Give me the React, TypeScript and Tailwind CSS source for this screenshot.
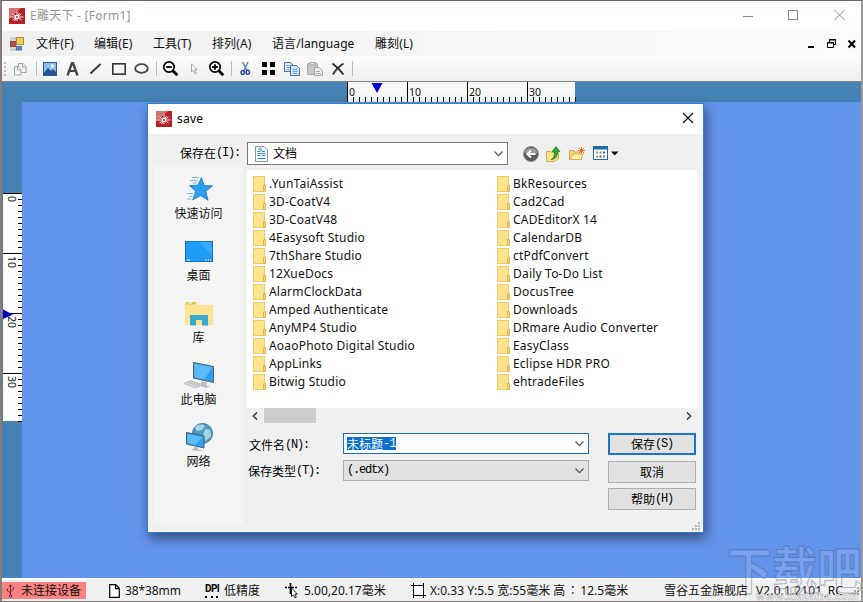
import type { ReactNode } from "react";
import clsx from "clsx";

const menus = [
  { label: "文件(F)", width: "w-[58px]" },
  { label: "编辑(E)", width: "w-[59px]" },
  { label: "工具(T)", width: "w-[59px]" },
  { label: "排列(A)", width: "w-[60px]" },
  { label: "语言/language", width: "w-[103px]" },
  { label: "雕刻(L)", width: "w-[50px]" },
];

const leftFiles = [
  ".YunTaiAssist",
  "3D-CoatV4",
  "3D-CoatV48",
  "4Easysoft Studio",
  "7thShare Studio",
  "12XueDocs",
  "AlarmClockData",
  "Amped Authenticate",
  "AnyMP4 Studio",
  "AoaoPhoto Digital Studio",
  "AppLinks",
  "Bitwig Studio",
];

const rightFiles = [
  "BkResources",
  "Cad2Cad",
  "CADEditorX 14",
  "CalendarDB",
  "ctPdfConvert",
  "Daily To-Do List",
  "DocusTree",
  "Downloads",
  "DRmare Audio Converter",
  "EasyClass",
  "Eclipse HDR PRO",
  "ehtradeFiles",
];

const ticks = Array.from({ length: 39 }, (_, i) => i);

function AppLogo() {
  return (
    <svg width="16" height="16" viewBox="0 0 16 16">
      <rect width="16" height="16" fill="#b81f24" />
      <path d="M0 0h12L0 11z" fill="#d4736f" />
      <path
        d="M8 3.500v9.500M1.500 9h13M3.500 6l9 6M12.500 6l-9 6M5.500 13l5-8"
        stroke="#fff"
        strokeWidth=".9"
      />
      <circle cx="8" cy="9" r="2.300" fill="#fff" />
      <circle cx="8" cy="9" r=".9" fill="#b81f24" />
    </svg>
  );
}

function FormIcon() {
  return (
    <svg width="15" height="14" viewBox="0 0 15 14">
      <rect x="1" y="1" width="5" height="12" fill="#dedede" stroke="#b9b9b9" />
      <rect x=".5" y="4.500" width="5" height="5" fill="#c8453b" stroke="#8d4a48" />
      <rect x="6.500" y=".5" width="7" height="7" fill="#f6cf55" stroke="#a88a3c" />
      <rect x="6.500" y="9.500" width="5" height="3.500" fill="#4f86d8" stroke="#5273a8" />
    </svg>
  );
}

function MagnifierIcon({ plus }: { plus?: boolean }) {
  return (
    <svg width="17" height="17" viewBox="0 0 17 17" fill="none" stroke="#000">
      <circle cx="7" cy="7" r="5.200" strokeWidth="1.700" />
      <path d="M10.800 10.800l4.500 4.500" strokeWidth="2.800" />
      <path d={plus ? "M4.200 7h5.600M7 4.200v5.600" : "M4.200 7h5.600"} strokeWidth="1.800" />
    </svg>
  );
}

function CopyIcon({ gray }: { gray?: boolean }) {
  if (gray) {
    return (
      <svg width="14" height="14" viewBox="0 0 14 14" fill="#f3f3f3" stroke="#a3a3a3">
        <path d="M5.500 1.500h4.500l3 3v6H5.500z" />
        <path d="M9.500 1.500v3.500h3.500" />
        <path d="M1.500 4.500h3.500l3 3v5.500h-6.500z" />
        <path d="M4.500 4.500V8H8" />
      </svg>
    );
  }
  return (
    <svg width="16" height="14" viewBox="0 0 16 14" fill="#dce9fa" stroke="#3f6fb5">
      <path d="M.5.500h6l3 3v6h-9z" />
      <path d="M2.500 3.500h3M2.500 5.500h5M2.500 7.500h4" stroke="#7ba2d8" />
      <path d="M6.500 3.500h6l3 3v7h-9z" />
      <path d="M8.500 7.500h5M8.500 9.500h5M8.500 11.500h5" stroke="#7ba2d8" />
    </svg>
  );
}

function Tool({ children }: { children: ReactNode }) {
  return (
    <button className="flex h-[25px] w-[23px] items-center justify-center">
      {children}
    </button>
  );
}

function ToolSeparator({ wide }: { wide?: boolean }) {
  return (
    <div className={clsx("flex justify-center", wide ? "w-[7px] pl-1" : "w-[6px]")}>
      <div className="h-[15px] w-px bg-[#bdbdbd]" />
    </div>
  );
}

function TitleBar() {
  return (
    <div className="flex h-[30px] shrink-0 items-center bg-white pl-[7px]">
      <AppLogo />
      <span className="ml-[5px] text-[12px] tracking-[0.25px] text-[#979797]">
        E雕天下 - [Form1]
      </span>
      <svg
        className="mr-[15px] ml-auto"
        width="103"
        height="12"
        viewBox="0 0 103 12"
        fill="none"
        stroke="#8a8a8a"
      >
        <path d="M0 6.500h10" />
        <rect x="45.500" y=".5" width="9" height="9" />
        <path d="M91.500 0l10 10M101.500 0l-10 10" />
      </svg>
    </div>
  );
}

function MenuBar() {
  return (
    <div className="flex h-[25px] shrink-0 items-center bg-linear-to-r from-[#f0f0f0] to-[#fbfbfb] pl-2">
      <FormIcon />
      <div className="ml-[11px] flex text-[12px] tracking-[0.1px] text-[#111]">
        {menus.map((menu) => (
          <button key={menu.label} className={clsx("text-left whitespace-nowrap", menu.width)}>
            {menu.label}
          </button>
        ))}
      </div>
      <svg
        className="mr-[5px] ml-auto"
        width="48"
        height="10"
        viewBox="0 0 48 10"
        fill="none"
        stroke="#000"
      >
        <path d="M0 8h6" strokeWidth="2" />
        <path d="M21.500 3V.500h6v5H26M21 1h7" />
        <path d="M19.500 3.500h6v5h-6zM19 4h7" />
        <path d="M40.500 1.500l6.500 7M47 1.500l-6.500 7" strokeWidth="2" />
      </svg>
    </div>
  );
}

function ToolBar() {
  return (
    <div className="flex h-[26px] shrink-0 items-center border-b border-[#7d8286] bg-linear-to-b from-[#fcfcfc] to-[#efefef] pl-px">
      <div className="flex w-[5px] flex-col gap-0.5 pl-px">
        {[0, 1, 2, 3].map((dot) => (
          <div key={dot} className="size-0.5 bg-[#bcbcbc]" />
        ))}
      </div>
      <Tool>
        <CopyIcon gray />
      </Tool>
      <ToolSeparator wide />
      <Tool>
        <svg width="14" height="14" viewBox="0 0 14 14">
          <rect x=".5" y=".5" width="13" height="13" fill="#8dbdee" stroke="#2d5c9e" />
          <path d="M1 11l4-5 3 3 2-2 3 3v3H1z" fill="#1f4f94" />
          <circle cx="9.500" cy="4" r="1.700" fill="#fff" />
        </svg>
      </Tool>
      <Tool>
        <svg width="13" height="14" viewBox="0 0 13 14" fill="none" stroke="#444">
          <path d="M1.500 13.500L6 1h1l4.500 12.500" strokeWidth="2.300" />
          <path d="M3.500 9h6" strokeWidth="2" />
        </svg>
      </Tool>
      <Tool>
        <svg width="13" height="13" viewBox="0 0 13 13">
          <path d="M1.500 11.500l10-9.500" stroke="#333" strokeWidth="1.800" />
        </svg>
      </Tool>
      <Tool>
        <svg width="14" height="12" viewBox="0 0 14 12">
          <rect x=".8" y=".8" width="12.400" height="10.400" fill="none" stroke="#333" strokeWidth="1.600" />
        </svg>
      </Tool>
      <Tool>
        <svg width="15" height="11" viewBox="0 0 15 11">
          <ellipse cx="7.500" cy="5.500" rx="6.300" ry="4.300" fill="none" stroke="#444" strokeWidth="1.800" />
        </svg>
      </Tool>
      <ToolSeparator />
      <Tool>
        <MagnifierIcon />
      </Tool>
      <Tool>
        <svg width="8" height="12" viewBox="0 0 8 12">
          <path d="M1.500.800v8l2-1.700 1.500 3.800 1.300-.6-1.600-3.600 2.500-.2z" fill="#fff" stroke="#8c98ab" strokeWidth=".8" />
        </svg>
      </Tool>
      <Tool>
        <MagnifierIcon plus />
      </Tool>
      <ToolSeparator />
      <Tool>
        <svg width="11" height="15" viewBox="0 0 11 15" fill="none">
          <path d="M2.500 1l4.500 8.500M8 1L4 9.500" stroke="#5d82b8" strokeWidth="1.500" />
          <ellipse cx="2.800" cy="11.500" rx="1.700" ry="2" stroke="#244f9c" strokeWidth="1.500" />
          <ellipse cx="7.800" cy="11.200" rx="1.700" ry="2" stroke="#244f9c" strokeWidth="1.500" />
        </svg>
      </Tool>
      <Tool>
        <div className="grid grid-cols-2 gap-[3px]">
          {[0, 1, 2, 3].map((cell) => (
            <div key={cell} className="size-[5px] bg-black" />
          ))}
        </div>
      </Tool>
      <Tool>
        <CopyIcon />
      </Tool>
      <Tool>
        <svg width="16" height="14" viewBox="0 0 16 14" stroke="#a5a5a5">
          <rect x=".5" y="1.500" width="10" height="11" rx="1" fill="#c6c6c6" />
          <rect x="3" y=".5" width="5" height="2.500" fill="#e3e3e3" />
          <path d="M7.500 5.500h5l3 3v5h-8z" fill="#eaeaea" />
          <path d="M9 9.500h4M9 11.500h5" />
        </svg>
      </Tool>
      <Tool>
        <svg width="14" height="14" viewBox="0 0 14 14" fill="none" stroke="#2d2d33">
          <path d="M1.500 1.500C5 4 9 8 12.500 12.500" strokeWidth="2" />
          <path d="M12.500 1.500C8.500 4 4.500 8 2 12.500" strokeWidth="1.700" />
        </svg>
      </Tool>
      <ToolSeparator />
    </div>
  );
}

function TopRuler() {
  return (
    <svg className="shrink-0" width="229" height="20" viewBox="0 0 229 20">
      <rect width="228" height="20" fill="#f8f8f8" />
      {ticks.map((i) => (
        <rect key={i} x={i * 6} y={i % 10 === 0 ? 0 : 15} width="1" height="20" fill="#000" />
      ))}
      {[0, 10, 20, 30].map((n) => (
        <text key={n} x={n * 6 + 2} y="14" fontSize="10.500" fill="#111">
          {n}
        </text>
      ))}
      <path d="M24.500 1h11L30 11z" fill="#0000d8" />
    </svg>
  );
}

function LeftRuler() {
  return (
    <svg className="shrink-0" width="20" height="229" viewBox="0 0 20 229">
      <rect x="1" width="19" height="228" fill="#fff" />
      {ticks.map((i) => (
        <rect key={i} x={i % 10 === 0 ? 1 : 16} y={i * 6} width="20" height="1" fill="#000" />
      ))}
      <path d="M1 116.500v9.500l10-4.500z" fill="#0000c0" />
      {[0, 10, 20, 30].map((n) => (
        <text
          key={n}
          transform={`translate(6 ${n * 6 + 3}) rotate(90)`}
          fontSize="10.500"
          fill="#111"
        >
          {n}
        </text>
      ))}
    </svg>
  );
}

/* Fixed-pitch label: full-width ideographs followed by half-width latin */
function DialogText({ cjk, latin }: { cjk?: string; latin?: string }) {
  return (
    <span className="inline-flex items-center text-[12px] leading-none whitespace-pre text-black">
      {cjk && <span className="font-['Noto_Sans_CJK_SC',sans-serif]">{cjk}</span>}
      {latin && (
        <span className="font-['Liberation_Mono',monospace] tracking-[-1.2px]">{latin}</span>
      )}
    </span>
  );
}

function Chevron() {
  return (
    <svg width="9" height="6" viewBox="0 0 9 6" fill="none" stroke="#555" strokeWidth="1.200">
      <path d="M.5.500l4 4.200 4-4.200" />
    </svg>
  );
}

function FolderIcon() {
  return (
    <svg width="13" height="16" viewBox="0 0 13 16">
      <rect x=".5" y=".5" width="11" height="15" fill="#ffe28c" stroke="#eccb6b" />
      <path d="M10.500 9.500h2v6h-2z" fill="#fbd568" stroke="#dfb850" />
    </svg>
  );
}

function FileColumn({ files }: { files: string[] }) {
  return (
    <ul className="w-[244px] shrink-0">
      {files.map((file) => (
        <li key={file} className="flex h-[18px] items-center gap-[3px]">
          <FolderIcon />
          <span className="text-[12px] leading-none tracking-[0.2px] text-[#111]">{file}</span>
        </li>
      ))}
    </ul>
  );
}

function Place({ label, children }: { label: string; children: ReactNode }) {
  return (
    <button className="flex h-[62px] w-full flex-col items-center">
      <span className="flex h-8 items-center">{children}</span>
      <span className="text-[12px] leading-[18px] text-[#111]">{label}</span>
    </button>
  );
}

function Places() {
  return (
    <div className="h-[359px] w-[89px] bg-[#f4f4f4] pt-2">
      <Place label="快速访问">
        <svg width="30" height="26" viewBox="0 0 30 26">
          <path
            d="M17.500 1.500l2.600 8 8.400.4-6.700 5.300 2.200 9-7.400-4.700-7.800 4.400 2.800-8.700-6.100-5.600 8.300-.4z"
            fill="#2ba0f0"
            stroke="#1577bd"
            strokeWidth=".8"
          />
          <path d="M8 1.500h7M6 4.500h8M9 7h4M3 17.500h6M5 20.500h3M3 23h4" stroke="#58aee0" strokeWidth=".8" />
        </svg>
      </Place>
      <Place label="桌面">
        <svg width="28" height="21" viewBox="0 0 28 21">
          <rect x=".5" y=".5" width="27" height="20" fill="#1f9cf5" stroke="#1473b8" />
          <path d="M14 1h13v13z" fill="#38a9f8" />
          <path d="M2 19h3M20 19h1.500M23 19h1M25 19h1" stroke="#fff" />
        </svg>
      </Place>
      <Place label="库">
        <svg width="28" height="25" viewBox="0 0 28 25">
          <path d="M0 1h11l2 3H28v20H0z" fill="#fde492" />
          <path d="M1 1h10v2.500H1z" fill="#e5be4c" />
          <path d="M3 2h4" stroke="#fff" />
          <path d="M5 24.500V14h18v10.500h-6V19h-6v5.500z" fill="#3ba9cf" />
        </svg>
      </Place>
      <Place label="此电脑">
        <svg width="32" height="28" viewBox="0 0 32 28">
          <path d="M10.500 1.500l20 4v16l-20-4.500z" fill="#2e9ff0" stroke="#555f68" />
          <path d="M11.500 2.800l18 3.500-8 12-10-2.300z" fill="#5bbcf8" />
          <path d="M19 20l5 1.500v3l3 1-4 1.500-6-2z" fill="#b9c1c6" />
          <path d="M1 22.500l6-3 13 4-7 3.500z" fill="#dde1e4" stroke="#a6adb2" strokeWidth=".7" />
          <path d="M4 21.500l12 3.700M6 20.500l11.500 3.500" stroke="#9ba3a8" strokeWidth=".6" />
        </svg>
      </Place>
      <Place label="网络">
        <svg width="28" height="29" viewBox="0 0 28 29">
          <circle cx="17.500" cy="10.500" r="10" fill="#4c9fc4" stroke="#36799a" />
          <path d="M10 4c4-3 8-3 10-1l-3 4-5 1zM20 6l5 1 1 6-5 5-3-5z" fill="#a6d5e6" />
          <path d="M1.500 9.500L19 13v12L1.500 21z" fill="#2e9ff0" stroke="#47606e" />
          <path d="M2.500 11l15.500 3-8 8-7.500-2z" fill="#5bbcf8" />
          <path d="M9 23.500l4 1v2l5 1.500-8-.2-4-1.500 3-.8z" fill="#b5bec4" />
        </svg>
      </Place>
    </div>
  );
}

function DialogButton({ children, primary }: { children: ReactNode; primary?: boolean }) {
  return (
    <button
      className={clsx(
        "flex h-[22px] w-[88px] items-center justify-center bg-[#e1e1e1]",
        primary ? "border-2 border-[#1a76c4]" : "border border-[#adadad]",
      )}
    >
      {children}
    </button>
  );
}

function NavIcons() {
  return (
    <div className="ml-[15px] flex items-center">
      <svg width="16" height="16" viewBox="0 0 16 16">
        <circle cx="8" cy="8" r="7.500" fill="#5c5c5c" stroke="#8f8f8f" />
        <path d="M1.500 7a6.500 5 0 0113 0z" fill="#999" />
        <path d="M12.500 8H4.500M8 4.500L4.300 8 8 11.500" fill="none" stroke="#fff" strokeWidth="1.800" />
      </svg>
      <svg className="ml-[7px]" width="15" height="16" viewBox="0 0 15 16">
        <path d="M.5 5.500h4l1 1h7v6l-4 3h-8z" fill="#fbe28a" stroke="#d4ac45" />
        <path d="M5 13.500c3-1 3.500-4 3.500-8H6l4-5 4 5h-2.500c0 5-2 8-6.500 8z" fill="#34a835" stroke="#1e7522" strokeWidth=".7" />
      </svg>
      <svg className="ml-2" width="17" height="14" viewBox="0 0 17 14">
        <path d="M.5 12.500v-9h4l1 1.500h7v7.500z" fill="#f7d880" stroke="#d1a23f" />
        <path d="M1 12.500l3-5.500h10.500l-3 5.500z" fill="#fff0ae" stroke="#dcb24f" />
        <path d="M12.500 0v7M9 3.500h7M10 1l5 5M15 1l-5 5" stroke="#ee6a36" />
      </svg>
      <svg className="ml-[7px]" width="26" height="15" viewBox="0 0 26 15">
        <rect x=".5" y=".5" width="14" height="13" fill="#fff" stroke="#2268ae" />
        <path d="M0 2h15" stroke="#2268ae" strokeWidth="3" />
        <path d="M3 6.500h2M3 10.500h2" stroke="#8aa54a" strokeWidth="2" />
        <path d="M6.500 6.500h2M10 10.500h2" stroke="#3a83c8" strokeWidth="2" />
        <path d="M10 6.500h2M6.500 10.500h2" stroke="#555" strokeWidth="2" />
        <path d="M18 5.500h7.500l-3.700 4z" fill="#111" />
      </svg>
    </div>
  );
}

function SaveDialog() {
  return (
    <div className="absolute top-[21px] left-[145px] flex h-[430px] w-[557px] flex-col border border-[#2583cf] bg-[#f0f0f0] shadow-[2px_5px_12px_rgba(0,0,0,0.5)]">
      <div className="flex h-[30px] shrink-0 items-center bg-white pl-2">
        <AppLogo />
        <span className="ml-[5px] text-[12px] tracking-[0.2px] text-black">save</span>
        <svg className="mr-[9px] mb-0.5 ml-auto" width="12" height="12" viewBox="0 0 12 12">
          <path d="M1 1l10 10M11 1L1 11" stroke="#111" strokeWidth="1.200" />
        </svg>
      </div>
      <div className="flex h-[31px] shrink-0 items-end pl-8">
        <div className="flex h-[22px] w-[67px] items-center pb-[3px]">
          <DialogText cjk="保存在" latin="(I):" />
        </div>
        <div className="flex h-[23px] w-[261px] items-center border border-[#7a7a7a] bg-white pr-1 pl-[7px]">
          <svg width="13" height="16" viewBox="0 0 13 16">
            <path d="M.5.500h8.500l3.500 3.500v11.500h-12z" fill="#f7fafc" stroke="#8796a0" />
            <path d="M2.500 5.500h3M7 5.500h3M2.500 7.500h8M2.500 9.500h3M7 9.500h3.500M2.500 12.500h8" stroke="#2d91be" />
            <path d="M3 4l3-2v3" fill="none" stroke="#2d91be" />
          </svg>
          <span className="mr-auto ml-[5px] text-[12px] text-black">文档</span>
          <Chevron />
        </div>
        <div className="flex h-[23px]">
          <NavIcons />
        </div>
      </div>
      <div className="flex flex-1 pl-1.5">
        <Places />
        <div className="ml-1 flex flex-col">
          <div className="mt-[5px] flex h-[238px] w-[450px] bg-white pt-[5px] pl-1.5">
            <FileColumn files={leftFiles} />
            <FileColumn files={rightFiles} />
          </div>
          <div className="flex h-[15px] w-[450px] items-center pr-[5px] pl-[5px]">
            <svg width="6" height="8" viewBox="0 0 6 8">
              <path d="M5 .5L1.500 4 5 7.500" fill="none" stroke="#444" strokeWidth="1.700" />
            </svg>
            <div className="ml-1.5 h-[15px] w-[52px] bg-[#cdcdcd]" />
            <svg className="ml-auto" width="6" height="8" viewBox="0 0 6 8">
              <path d="M1 .5L4.500 4 1 7.500" fill="none" stroke="#444" strokeWidth="1.700" />
            </svg>
          </div>
          <div className="mt-2.5 flex">
            <div className="flex w-24 flex-col gap-[5px] pt-px pl-0.5">
              <div className="flex h-[22px] items-center">
                <DialogText cjk="文件名" latin="(N):" />
              </div>
              <div className="-ml-px flex h-5 items-center">
                <DialogText cjk="保存类型" latin="(T):" />
              </div>
            </div>
            <div className="flex w-[246px] flex-col gap-[6px]">
              <div className="flex h-[21px] items-center border border-[#1f6fb5] bg-white pr-1 pl-[3px]">
                <span className="mr-auto flex h-[13px] items-center bg-[#0a6fcc] text-[12px] leading-none text-white">
                  <span className="font-['Noto_Sans_CJK_SC',sans-serif]">未标题</span>
                  <span className="font-['Liberation_Mono',monospace] tracking-[-0.8px]">-1</span>
                </span>
                <Chevron />
              </div>
              <div className="flex h-[21px] items-center border border-[#adadad] bg-[#e1e1e1] pr-1 pl-[3px]">
                <span className="mr-auto flex pb-0.5">
                  <DialogText latin="(.edtx)" />
                </span>
                <Chevron />
              </div>
            </div>
            <div className="ml-[19px] flex flex-col gap-[5.5px]">
              <DialogButton primary>
                <DialogText cjk="保存" latin="(S)" />
              </DialogButton>
              <DialogButton>
                <DialogText cjk="取消" />
              </DialogButton>
              <DialogButton>
                <DialogText cjk="帮助" latin="(H)" />
              </DialogButton>
            </div>
          </div>
          <svg className="mt-auto mr-[-4px] mb-px ml-auto" width="9" height="9" viewBox="0 0 9 9" fill="#b5b5b5">
            <path d="M6 0h2v2H6zM6 3h2v2H6zM3 3h2v2H3zM6 6h2v2H6zM3 6h2v2H3zM0 6h2v2H0z" />
          </svg>
        </div>
      </div>
    </div>
  );
}

function StatusBar() {
  return (
    <div className="flex h-[23px] shrink-0 items-center border-t-2 border-[#fafafa] bg-[#f0f0f0] text-[12px] leading-none whitespace-nowrap text-[#111]">
      <div className="flex h-[17px] w-[84px] items-center bg-[#fa8282] pl-1">
        <svg width="9" height="14" viewBox="0 0 9 14" fill="none" stroke="#5a2222" strokeWidth=".9">
          <path d="M4.500 1v10M4.500 9L1.500 7V4.500M4.500 7.500l3-2V3.500M3.200 2.500L4.500.800l1.300 1.700" />
          <circle cx="4.500" cy="12" r="1.300" />
        </svg>
        <span className="ml-1.5">未连接设备</span>
      </div>
      <div className="ml-[23px] flex w-[96px] items-center gap-[5px]">
        <svg width="11" height="14" viewBox="0 0 11 14">
          <path d="M.700.700h6l3.600 3.600v9H.700zM6.500.700v4h4" fill="#fff" stroke="#000" strokeWidth="1.200" />
        </svg>
        <span className="tracking-[-0.1px]">38*38mm</span>
      </div>
      <div className="flex w-[80px] items-center gap-1">
        <span className="flex h-[14px] w-[15px] flex-col justify-between">
          <span className="font-['Roboto',sans-serif] text-[10px] leading-[10px] font-extrabold tracking-[-0.6px]">
            DPI
          </span>
          <span className="flex justify-between pr-0.5">
            <span className="size-0.5 bg-black" />
            <span className="size-0.5 bg-black" />
            <span className="size-0.5 bg-black" />
          </span>
        </span>
        <span>低精度</span>
      </div>
      <div className="flex w-[126px] items-center gap-[5px]">
        <svg width="14" height="16" viewBox="0 0 14 16">
          <path d="M5.500 0v11" stroke="#000" strokeWidth="1.700" />
          <path d="M0 4.500h2M3 4.500h6M10 4.500h2" stroke="#000" strokeWidth="1.500" />
          <path d="M6.500 5v8.500l2-1.700 1.300 3 1.500-.7-1.300-3h2.500z" fill="#fff" stroke="#111" strokeWidth=".9" />
        </svg>
        <span>5.00,20.17毫米</span>
      </div>
      <div className="flex w-[253px] items-center gap-1">
        <svg width="15" height="15" viewBox="0 0 15 15">
          <path d="M3 3h9v9H3z" fill="#fff" />
          <path d="M0 2.500h13M2 12.500h13M2.500 0v15M12.500 0v15" stroke="#000" />
        </svg>
        <span>
          X:0.33 Y:5.5 宽:55毫米 高
          <span className="inline-block w-[15px] text-center font-['Noto_Sans_CJK_TC',sans-serif]">
            ：
          </span>
          12.5毫米
        </span>
      </div>
      <span className="w-[92px]">雪谷五金旗舰店</span>
      <span className="tracking-[0.12px]">V2.0.1.2101_RC</span>
      <svg className="mr-0.5 ml-auto" width="8" height="8" viewBox="0 0 8 8" fill="#999">
        <path d="M6 0h2v2H6zM6 3h2v2H6zM3 3h2v2H3zM6 6h2v2H6zM3 6h2v2H3zM0 6h2v2H0z" />
      </svg>
    </div>
  );
}

export default function App() {
  return (
    <div className="relative flex h-[602px] w-[863px] flex-col overflow-hidden border-t border-r-2 border-b border-l-2 border-t-[#6d6260] border-r-[#9d9796] border-b-[#7a7370] border-l-[#867b75] bg-[#f0f0f0] font-['Noto_Sans','Noto_Sans_CJK_SC',sans-serif]">
      <TitleBar />
      <MenuBar />
      <ToolBar />
      <div className="relative flex flex-1 flex-col bg-[#4682b4]">
        <div className="flex h-5 shrink-0 items-start pl-[345px]">
          <TopRuler />
        </div>
        <div className="flex flex-1">
          <div className="w-5 pt-[91px]">
            <LeftRuler />
          </div>
          <div className="flex-1 bg-[#6495ed]" />
        </div>
        <SaveDialog />
      </div>
      <StatusBar />
      <div className="pointer-events-none absolute right-[-1px] bottom-0 flex h-14 w-[136px] flex-col items-end whitespace-nowrap">
        <span className="origin-center scale-y-110 font-['Noto_Sans_CJK_SC',sans-serif] text-[45px] leading-[46px] font-bold text-white/15 [-webkit-text-stroke:1px_rgba(60,80,120,0.4)]">
          下载吧
        </span>
        <span className="pr-1 text-[11px] leading-[10px] font-bold text-white [-webkit-text-stroke:0.5px_#aaa]">
          www.xiazaiba.com
        </span>
      </div>
    </div>
  );
}
